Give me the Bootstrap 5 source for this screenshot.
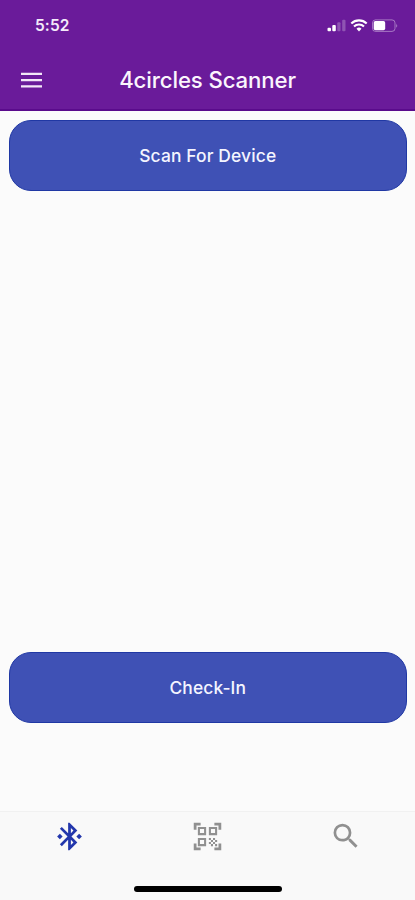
<!DOCTYPE html>
<html lang="en">
<head>
<meta charset="utf-8">
<meta name="viewport" content="width=device-width, initial-scale=1">
<title>4circles Scanner</title>
<link rel="stylesheet" href="https://cdn.jsdelivr.net/npm/bootstrap@5.3.0/dist/css/bootstrap.min.css">
<style>
body{font-family:Inter,"Liberation Sans",sans-serif;background:#fbfbfb;height:900px;overflow:hidden}
.top-area{background:#6a1b9a;height:111px;border-bottom:2px solid #5a0b8c}
.status-row{height:51px;padding:0 17px 0 35px}
.clock{font-size:15.5px;font-weight:600;letter-spacing:.1px;color:#f5eafa;padding-top:1px}
.title-row{height:58px;display:grid;grid-template-columns:63px 1fr 63px;align-items:center}
.app-title{font-size:22.2px;font-weight:550;letter-spacing:-.12px;color:#fbf5fd;line-height:1;white-space:nowrap}
.content-area{padding:9px 8.5px 88px 9px}
.action-btn{height:71px;padding-top:8px;border-radius:22px;border:1px solid #2038a4;border-width:1.5px 1px;background:#3f51b5;color:#f4f5ff;font-size:17.4px;font-weight:550;letter-spacing:.14px}
.action-btn:hover{background:#3849a8;color:#fff;border-color:#2038a4}
.bottom-area{height:89px;background:#f9f9f9;border-top:1px solid #f1f1f1}
.tab-item{color:#909090;padding:8px 0 0}
.tab-item.active{color:#2337ac}
.home-bar{width:148px;height:6px;background:#000;margin-bottom:8px}
</style>
<script src="https://cdn.jsdelivr.net/npm/bootstrap@5.3.0/dist/js/bootstrap.bundle.min.js"></script>
</head>
<body class="d-flex flex-column">
<header class="top-area flex-shrink-0">
  <div class="status-row d-flex align-items-center justify-content-between">
    <span class="clock">5:52</span>
    <svg width="72" height="16" viewBox="326 18 72 16" fill="#fff" aria-hidden="true">
      <rect x="327.5" y="27.8" width="3.5" height="3.4" rx="1"/>
      <rect x="332.3" y="25" width="3.5" height="6.2" rx="1"/>
      <rect x="337.3" y="22.3" width="3.2" height="8.9" rx="1" opacity=".25"/>
      <rect x="342.2" y="19.8" width="3.3" height="11.4" rx="1" opacity=".25"/>
      <g fill="none" stroke="#fff" stroke-width="2.1">
        <path d="M351.3 23.5a11 11 0 0 1 15.4 0"/>
        <path d="M354 26.5a7.1 7.1 0 0 1 10 0"/>
      </g>
      <path d="M359 31.4l-2.5-2.7a3.7 3.7 0 0 1 5 0z"/>
      <rect x="372.5" y="19.9" width="22.5" height="11.5" rx="3" fill="none" stroke="#fff" opacity=".4"/>
      <rect x="373.7" y="21.1" width="11.5" height="9.1" rx="1.7"/>
      <path d="M396.3 23.5q1.7 2.1 0 4.2z" opacity=".5"/>
    </svg>
  </div>
  <div class="title-row">
    <button class="btn border-0 p-0 d-flex justify-content-center" aria-label="Menu">
      <svg width="21" height="16" viewBox="0 0 21 16" fill="#f3e7f8"><path d="M0 .8h21v2.3H0zM0 7h21v2.3H0zM0 13.2h21v2.3H0z"/></svg>
    </button>
    <h1 class="app-title text-center m-0">4circles Scanner</h1>
  </div>
</header>
<main class="content-area flex-grow-1 d-flex flex-column justify-content-between">
  <button class="btn action-btn w-100">Scan For Device</button>
  <button class="btn action-btn w-100">Check-In</button>
</main>
<footer class="bottom-area flex-shrink-0 d-flex flex-column justify-content-between align-items-center">
  <nav class="row g-0 w-100 text-center">
    <a class="col tab-item active" href="#" aria-label="Bluetooth"><svg class="d-block mx-auto" width="33" height="33" viewBox="0 0 24 24" fill="currentColor"><path d="M7 12l-2-2-2 2 2 2 2-2zm10.71-4.29L12 2h-1v7.59L6.41 5 5 6.41 10.59 12 5 17.59 6.41 19 11 14.41V22h1l5.71-5.71-4.3-4.29 4.3-4.29zM13 5.83l1.88 1.88L13 9.59V5.83zm1.88 10.46L13 18.17v-3.76l1.88 1.88zM19 10l-2 2 2 2 2-2-2-2z"/></svg></a>
    <a class="col tab-item" href="#" aria-label="Scan code"><svg class="d-block mx-auto" width="33" height="33" viewBox="0 0 24 24" fill="currentColor"><path d="M9.5 6.5v3h-3v-3h3M11 5H5v6h6V5zM9.5 14.5v3h-3v-3h3M11 13H5v6h6v-6zM17.5 6.5v3h-3v-3h3M19 5h-6v6h6V5zM13 13h1.5v1.5H13zM14.5 14.5H16V16h-1.5zM16 13h1.5v1.5H16zM13 16h1.5v1.5H13zM14.5 17.5H16V19h-1.5zM16 16h1.5v1.5H16zM17.5 14.5H19V16h-1.5zM17.5 17.5H19V19h-1.5zM22 7h-2V4h-3V2h5zM22 22v-5h-2v3h-3v2zM2 22h5v-2H4v-3H2zM2 2v5h2V4h3V2z"/></svg></a>
    <a class="col tab-item" href="#" aria-label="Search"><svg class="d-block mx-auto" width="33" height="33" viewBox="-.3 .3 24 24" fill="currentColor"><path d="M15.5 14h-.79l-.28-.27A6.471 6.471 0 0 0 16 9.5 6.5 6.5 0 1 0 9.5 16c1.61 0 3.09-.59 4.23-1.57l.27.28v.79l5 4.99L20.49 19l-4.99-5zm-6 0C7.01 14 5 11.99 5 9.5S7.01 5 9.5 5 14 7.01 14 9.5 11.99 14 9.5 14z"/></svg></a>
  </nav>
  <div class="home-bar rounded-pill"></div>
</footer>
</body>
</html>
